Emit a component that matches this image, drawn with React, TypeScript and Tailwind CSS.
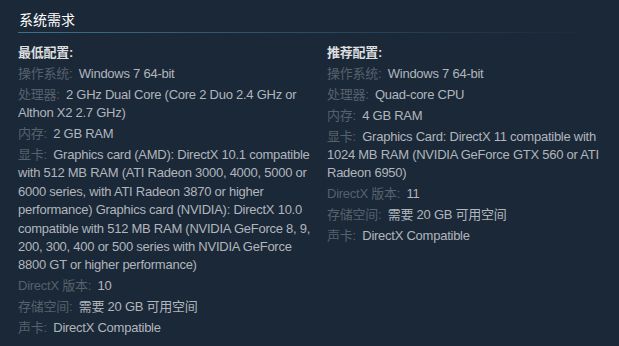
import React from "react";

type Item = { label: string; value: string };

const minReq: Item[] = [
  { label: "操作系统:", value: "Windows 7 64-bit" },
  { label: "处理器:", value: "2 GHz Dual Core (Core 2 Duo 2.4 GHz or Althon X2 2.7 GHz)" },
  { label: "内存:", value: "2 GB RAM" },
  {
    label: "显卡:",
    value:
      "Graphics card (AMD): DirectX 10.1 compatible with 512 MB RAM (ATI Radeon 3000, 4000, 5000 or 6000 series, with ATI Radeon 3870 or higher performance) Graphics card (NVIDIA): DirectX 10.0 compatible with 512 MB RAM (NVIDIA GeForce 8, 9, 200, 300, 400 or 500 series with NVIDIA GeForce 8800 GT or higher performance)",
  },
  { label: "DirectX 版本:", value: "10" },
  { label: "存储空间:", value: "需要 20 GB 可用空间" },
  { label: "声卡:", value: "DirectX Compatible" },
];

const recReq: Item[] = [
  { label: "操作系统:", value: "Windows 7 64-bit" },
  { label: "处理器:", value: "Quad-core CPU" },
  { label: "内存:", value: "4 GB RAM" },
  {
    label: "显卡:",
    value:
      "Graphics Card: DirectX 11 compatible with 1024 MB RAM (NVIDIA GeForce GTX 560 or ATI Radeon 6950)",
  },
  { label: "DirectX 版本:", value: "11" },
  { label: "存储空间:", value: "需要 20 GB 可用空间" },
  { label: "声卡:", value: "DirectX Compatible" },
];

function Column({ title, items, className }: { title: string; items: Item[]; className: string }) {
  return (
    <div className={className}>
      <div className="mb-[2.6px] font-semibold text-[#dcdedf]">{title}</div>
      <ul>
        {items.map((it, i) => (
          <li key={i} className="mb-[2.6px] text-[#b0b6bc]">
            <span className="mr-[3px] text-[#56616c]">{it.label}</span> {it.value}
          </li>
        ))}
      </ul>
    </div>
  );
}

export default function App() {
  return (
    <div
      className="w-[619px] h-[346px] bg-[#1b2838] pl-[18px] pt-[11px] overflow-hidden"
      style={{ fontFamily: '"Liberation Sans", "Noto Sans CJK SC", Arial, sans-serif' }}
    >
      <div className="text-[14px] leading-[18px] text-[#ffffff] pl-px">系统需求</div>
      <div className="mt-[3px] h-px w-[577px] bg-gradient-to-r from-[#3e7190] via-[#2c4b61] to-[#1b2838]" />
      <div className="mt-[10.5px] flex text-[13px] leading-[18.4px] tracking-[-0.25px]">
        <Column title="最低配置:" items={minReq} className="w-[304px] shrink-0" />
        <Column title="推荐配置:" items={recReq} className="ml-[5px] w-[282px] shrink-0" />
      </div>
    </div>
  );
}
